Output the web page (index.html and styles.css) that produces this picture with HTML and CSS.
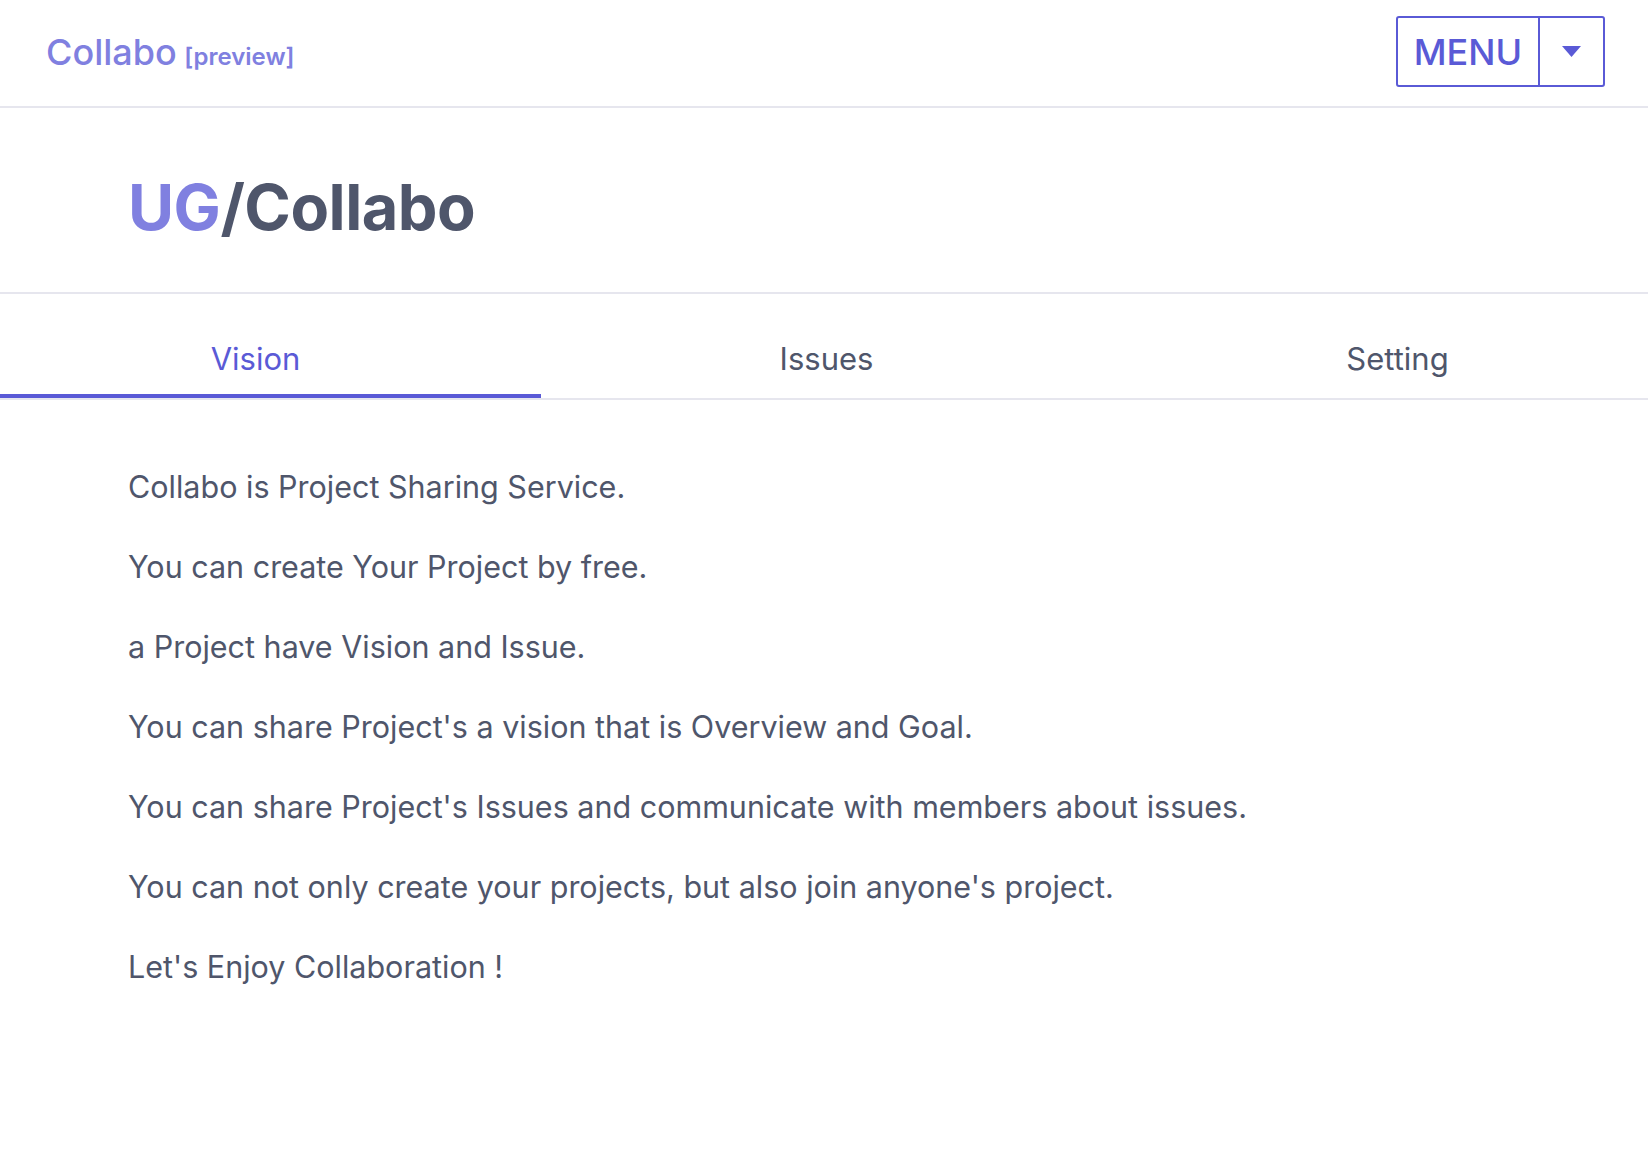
FILE: index.html
```html
<!DOCTYPE html>
<html lang="en">
<head>
<meta charset="utf-8">
<title>Collabo</title>
<link rel="stylesheet" href="styles.css">
</head>
<body>
<header class="topbar">
  <div class="brand"><span class="brand-name">Collabo</span> <span class="brand-tag">[preview]</span></div>
  <div class="menu-btn">
    <span class="menu-label">MENU</span>
    <span class="menu-caret"><svg width="19" height="11" viewBox="0 0 19 11"><polygon points="0,0 19,0 9.5,11" fill="#5a5ad6"/></svg></span>
  </div>
</header>
<section class="project-head">
  <h1 class="project-title"><span class="owner">UG</span>/Collabo</h1>
</section>
<nav class="tabs">
  <div class="tab active">Vision</div>
  <div class="tab">Issues</div>
  <div class="tab">Setting</div>
</nav>
<main class="vision">
  <p>Collabo is Project Sharing Service.</p>
  <p>You can create Your Project by free.</p>
  <p>a Project have Vision and Issue.</p>
  <p>You can share Project's a vision that is Overview and Goal.</p>
  <p>You can share Project's Issues and communicate with members about issues.</p>
  <p>You can not only create your projects, but also join anyone's project.</p>
  <p>Let's Enjoy Collaboration !</p>
</main>
</body>
</html>
```
FILE: styles.css
```css
html, body {
  margin: 0;
  padding: 0;
  background: #ffffff;
  overflow-x: hidden;
}
body {
  font-family: Inter, "Noto Sans", sans-serif;
  color: #4f566b;
}
.topbar {
  display: flex;
  align-items: center;
  justify-content: space-between;
  height: 108px;
  box-sizing: border-box;
  padding: 16px 43px 19px 46px;
  border-bottom: 2px solid #e6e6ee;
}
.brand {
  color: #8080e0;
  white-space: nowrap;
}
.brand-name {
  font-size: 36px;
  font-weight: 500;
}
.brand-tag {
  font-size: 24px;
  font-weight: 600;
  margin-left: 3px;
}
.menu-btn {
  display: flex;
  height: 71px;
  box-sizing: border-box;
  border: 2px solid #5a5ad6;
  border-radius: 3px;
  color: #5a5ad6;
}
.menu-label {
  display: flex;
  align-items: center;
  justify-content: center;
  width: 140px;
  font-size: 36px;
  font-weight: 500;
  border-right: 2px solid #5a5ad6;
}
.menu-caret {
  display: flex;
  align-items: center;
  justify-content: center;
  width: 63px;
}
.project-head {
  height: 186px;
  box-sizing: border-box;
  padding: 0 0 0 128px;
  display: flex;
  align-items: center;
  border-bottom: 2px solid #e6e6ee;
}
.project-title {
  margin: 15px 0 0;
  font-size: 63px;
  font-weight: 700;
  line-height: 1;
  color: #4f566b;
  letter-spacing: -0.5px;
}
.owner {
  color: #8080e0;
}
.tabs {
  display: grid;
  grid-template-columns: repeat(3, 571px);
  margin-left: -30px;
  width: 1713px;
  border-bottom: 2px solid #e6e6ee;
}
.tab {
  height: 104px;
  box-sizing: border-box;
  padding-top: 45px;
  text-align: center;
  font-size: 31px;
  line-height: 40px;
  color: #4f566b;
}
.tab.active {
  color: #5a5ad6;
  border-bottom: 4px solid #5a5ad6;
}
.vision {
  padding: 62px 0 0 128px;
}
.vision p {
  margin: 0 0 30px;
  font-size: 30.5px;
  line-height: 50px;
}
```
